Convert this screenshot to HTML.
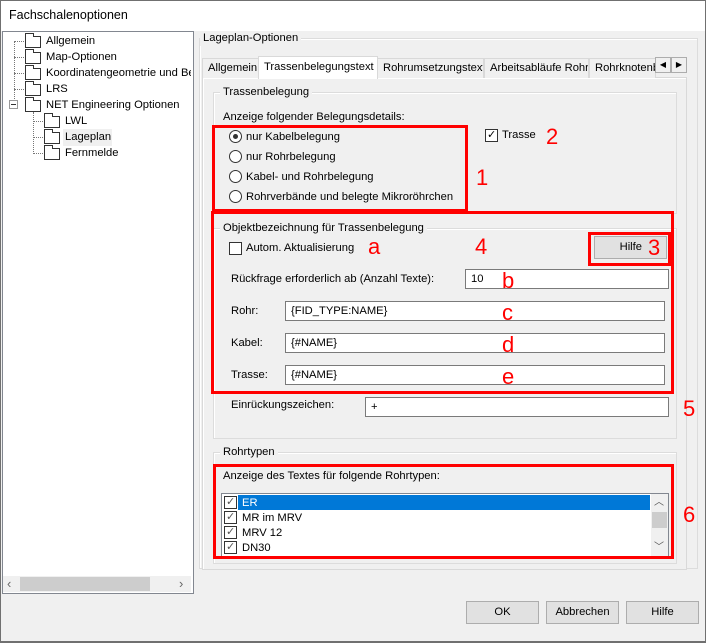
<!DOCTYPE html>
<html><head><meta charset="utf-8"><style>
*{box-sizing:border-box;margin:0;padding:0}
body{width:706px;height:643px;background:#f0f0f0;font-family:"Liberation Sans",sans-serif;font-size:11.2px;color:#000;position:relative;overflow:hidden}
.a{position:absolute}
.grp{position:absolute;border:1px solid #dcdcdc;box-shadow:inset 1px 1px 0 #fff}
.gl{position:absolute;background:#f0f0f0;padding:0 3px;top:-8px;left:6px;white-space:nowrap;line-height:15px}
.red{position:absolute;border:3px solid #f00}
.rn{position:absolute;color:#f00;font-size:22px;line-height:22px}
.inp{position:absolute;background:#fff;border:1px solid #7a7a7a;padding:2px 5px;height:20px;line-height:15px}
.radio{position:absolute;width:13px;height:13px;border:1px solid #333;border-radius:50%;background:#fff}
.cb{position:absolute;width:13px;height:13px;border:1px solid #333;background:#fff}
.btn{position:absolute;background:#e1e1e1;border:1px solid #adadad;text-align:center;line-height:21px}
.tab{position:absolute;top:58px;height:20px;border:1px solid #d9d9d9;border-bottom:none;background:#f0f0f0;line-height:19px;padding-left:5px;white-space:nowrap;overflow:hidden}
.ti{position:absolute;white-space:nowrap;line-height:15px}
.fold{position:absolute;width:16px;height:12px;border:1px solid #333;background:#fff}
.fold:before{content:"";position:absolute;left:-1px;top:-4px;width:7px;height:3px;border:1px solid #333;border-bottom:none;background:#fff}
</style></head><body>
<div class="a" style="left:0;top:0;width:706px;height:643px;border:1px solid #707070;border-bottom:2px solid #707070"></div>
<div class="a" style="left:1px;top:1px;width:704px;height:30px;background:#fff"></div>
<div class="ti" style="left:9px;top:8px;font-size:12.5px">Fachschalenoptionen</div>

<div class="a" style="left:2px;top:31px;width:192px;height:563px;background:#fff;border:1px solid #828790"></div>
<div class="a" style="left:14px;top:41px;height:64px;border-left:1px dotted #777"></div>
<div class="a" style="left:14px;top:41px;width:10px;border-top:1px dotted #777"></div>
<div class="a" style="left:14px;top:57px;width:10px;border-top:1px dotted #777"></div>
<div class="a" style="left:14px;top:73px;width:10px;border-top:1px dotted #777"></div>
<div class="a" style="left:14px;top:89px;width:10px;border-top:1px dotted #777"></div>
<div class="a" style="left:9px;top:100px;width:9px;height:9px;border:1px solid #999;background:#fff"></div>
<div class="a" style="left:11px;top:104px;width:5px;border-top:1px solid #333"></div>
<div class="a" style="left:33px;top:112px;height:42px;border-left:1px dotted #777"></div>
<div class="a" style="left:33px;top:121px;width:10px;border-top:1px dotted #777"></div>
<div class="a" style="left:33px;top:137px;width:10px;border-top:1px dotted #777"></div>
<div class="a" style="left:33px;top:153px;width:10px;border-top:1px dotted #777"></div>
<div class="fold" style="left:25px;top:36px"></div><div class="ti" style="left:46px;top:34px">Allgemein</div>
<div class="fold" style="left:25px;top:52px"></div><div class="ti" style="left:46px;top:50px">Map-Optionen</div>
<div class="fold" style="left:25px;top:68px"></div><div class="ti" style="left:46px;top:66px;width:145px;overflow:hidden">Koordinatengeometrie und Bemaßung</div>
<div class="fold" style="left:25px;top:84px"></div><div class="ti" style="left:46px;top:82px">LRS</div>
<div class="fold" style="left:25px;top:100px"></div><div class="ti" style="left:46px;top:98px">NET Engineering Optionen</div>
<div class="fold" style="left:44px;top:116px"></div><div class="ti" style="left:65px;top:114px">LWL</div>
<div class="a" style="left:63px;top:129px;width:49px;height:17px;background:#f0f0f0"></div>
<div class="fold" style="left:44px;top:132px"></div><div class="ti" style="left:65px;top:130px">Lageplan</div>
<div class="fold" style="left:44px;top:148px"></div><div class="ti" style="left:65px;top:146px">Fernmelde</div>
<div class="a" style="left:3px;top:576px;width:188px;height:16px;background:#f0f0f0"></div>
<div class="a" style="left:20px;top:577px;width:130px;height:14px;background:#cdcdcd"></div>
<div class="ti" style="left:7px;top:576px;color:#666;font-size:13px">‹</div>
<div class="ti" style="left:179px;top:576px;color:#666;font-size:13px">›</div>

<div class="grp" style="left:199px;top:38px;width:499px;height:531px"><span class="gl" style="left:0">Lageplan-Optionen</span></div>
<div class="a" style="left:202px;top:77px;width:485px;height:493px;border:1px solid #d9d9d9;background:#f0f0f0;box-shadow:inset 1px 1px 0 #fff"></div>
<div class="tab" style="left:202px;width:57px">Allgemein</div>
<div class="tab" style="left:258px;top:56px;height:23px;width:120px;background:#fff;border-color:#d9d9d9;line-height:20px;z-index:2">Trassenbelegungstext</div>
<div class="tab" style="left:377px;width:107px">Rohrumsetzungstext</div>
<div class="tab" style="left:484px;width:105px">Arbeitsabläufe Rohr</div>
<div class="tab" style="left:589px;width:67px">Rohrknotenbearbeitung</div>
<div class="btn" style="left:655px;top:57px;width:16px;height:16px;line-height:14px;font-size:8px;background:#f0f0f0">◀</div>
<div class="btn" style="left:671px;top:57px;width:16px;height:16px;line-height:14px;font-size:8px;background:#f0f0f0">▶</div>

<div class="grp" style="left:213px;top:92px;width:464px;height:122px"><span class="gl">Trassenbelegung</span></div>
<div class="ti" style="left:223px;top:110px">Anzeige folgender Belegungsdetails:</div>
<div class="radio" style="left:229px;top:130px"></div><div class="a" style="left:233px;top:134px;width:5px;height:5px;border-radius:50%;background:#333"></div>
<div class="ti" style="left:246px;top:130px">nur Kabelbelegung</div>
<div class="radio" style="left:229px;top:150px"></div><div class="ti" style="left:246px;top:150px">nur Rohrbelegung</div>
<div class="radio" style="left:229px;top:170px"></div><div class="ti" style="left:246px;top:170px">Kabel- und Rohrbelegung</div>
<div class="radio" style="left:229px;top:190px"></div><div class="ti" style="left:246px;top:190px">Rohrverbände und belegte Mikroröhrchen</div>
<div class="red" style="left:212px;top:125px;width:256px;height:87px"></div>
<div class="rn" style="left:476px;top:167px">1</div>
<div class="cb" style="left:485px;top:129px"></div><div class="ti" style="left:487px;top:128px;font-size:11px">✓</div>
<div class="ti" style="left:502px;top:128px">Trasse</div>
<div class="rn" style="left:546px;top:126px">2</div>

<div class="grp" style="left:213px;top:228px;width:464px;height:211px"><span class="gl">Objektbezeichnung für Trassenbelegung</span></div>
<div class="cb" style="left:229px;top:242px"></div><div class="ti" style="left:246px;top:241px">Autom. Aktualisierung</div>
<div class="rn" style="left:368px;top:236px">a</div>
<div class="rn" style="left:475px;top:236px">4</div>
<div class="btn" style="left:594px;top:236px;width:73px;height:23px;text-align:right;padding-right:24px;line-height:21px">Hilfe</div>
<div class="red" style="left:588px;top:232px;width:83px;height:34px"></div>
<div class="rn" style="left:648px;top:237px">3</div>
<div class="ti" style="left:231px;top:272px">Rückfrage erforderlich ab (Anzahl Texte):</div>
<div class="inp" style="left:465px;top:269px;width:204px">10</div>
<div class="ti" style="left:231px;top:304px">Rohr:</div>
<div class="inp" style="left:285px;top:301px;width:380px">{FID_TYPE:NAME}</div>
<div class="ti" style="left:231px;top:336px">Kabel:</div>
<div class="inp" style="left:285px;top:333px;width:380px">{#NAME}</div>
<div class="ti" style="left:231px;top:368px">Trasse:</div>
<div class="inp" style="left:285px;top:365px;width:380px">{#NAME}</div>
<div class="rn" style="left:502px;top:270px">b</div>
<div class="rn" style="left:502px;top:302px">c</div>
<div class="rn" style="left:502px;top:334px">d</div>
<div class="rn" style="left:502px;top:366px">e</div>
<div class="red" style="left:211px;top:211px;width:463px;height:183px"></div>
<div class="ti" style="left:231px;top:398px">Einrückungszeichen:</div>
<div class="inp" style="left:365px;top:397px;width:304px">+</div>
<div class="rn" style="left:683px;top:398px">5</div>

<div class="grp" style="left:213px;top:452px;width:464px;height:112px"><span class="gl">Rohrtypen</span></div>
<div class="ti" style="left:223px;top:469px">Anzeige des Textes für folgende Rohrtypen:</div>
<div class="a" style="left:221px;top:493px;width:448px;height:64px;background:#fff;border:1px solid #828790"></div>
<div class="a" style="left:238px;top:495px;width:412px;height:15px;background:#0078d7"></div>
<div class="ti" style="left:242px;top:496px;color:#fff">ER</div>
<div class="ti" style="left:242px;top:511px">MR im MRV</div>
<div class="ti" style="left:242px;top:526px">MRV 12</div>
<div class="ti" style="left:242px;top:541px">DN30</div>
<div class="cb" style="left:224px;top:496px;border-color:#333"></div><div class="ti" style="left:226px;top:495px;font-size:11px;color:#555">✓</div>
<div class="cb" style="left:224px;top:511px"></div><div class="ti" style="left:226px;top:510px;font-size:11px;color:#555">✓</div>
<div class="cb" style="left:224px;top:526px"></div><div class="ti" style="left:226px;top:525px;font-size:11px;color:#555">✓</div>
<div class="cb" style="left:224px;top:541px"></div><div class="ti" style="left:226px;top:540px;font-size:11px;color:#555">✓</div>
<div class="a" style="left:651px;top:494px;width:17px;height:62px;background:#f0f0f0"></div>
<div class="a" style="left:652px;top:512px;width:15px;height:16px;background:#cdcdcd"></div>
<div class="ti" style="left:654px;top:495px;font-size:10px;color:#555">︿</div>
<div class="ti" style="left:654px;top:540px;font-size:10px;color:#555">﹀</div>
<div class="red" style="left:213px;top:464px;width:461px;height:95px"></div>
<div class="rn" style="left:683px;top:504px">6</div>

<div class="btn" style="left:466px;top:601px;width:73px;height:23px">OK</div>
<div class="btn" style="left:546px;top:601px;width:73px;height:23px">Abbrechen</div>
<div class="btn" style="left:626px;top:601px;width:73px;height:23px">Hilfe</div>
</body></html>
